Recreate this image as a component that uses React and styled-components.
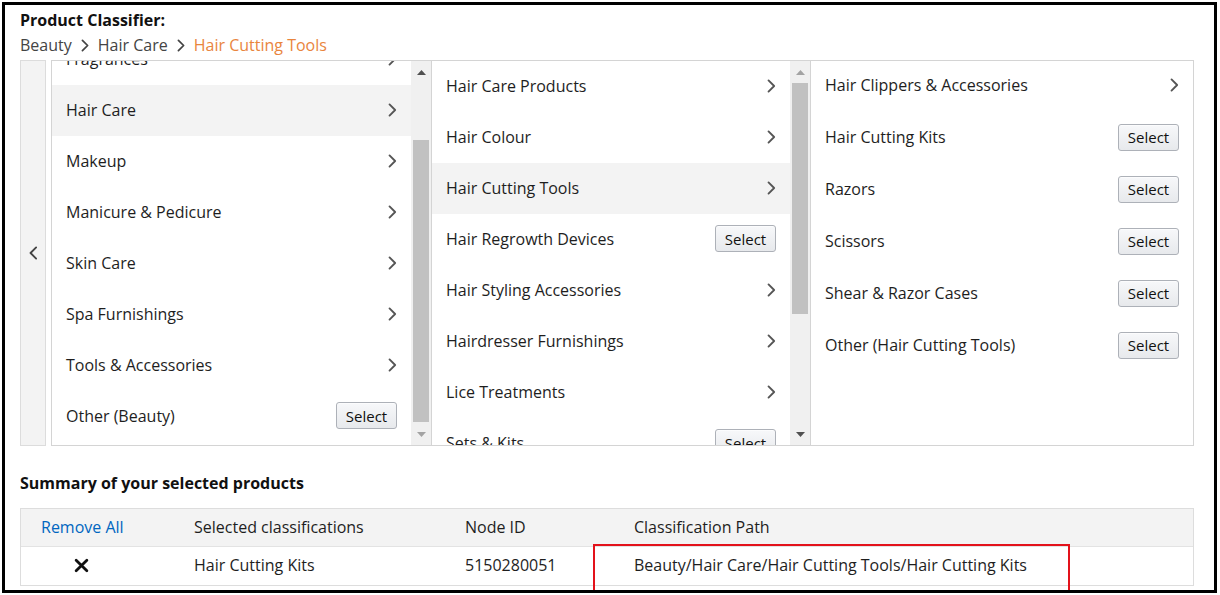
import React from "react";
import styled, { createGlobalStyle } from "styled-components";

const GlobalStyle = createGlobalStyle`
  html, body { margin: 0; padding: 0; background: #fff; }
  body { font-family: "Open Sans", "Noto Sans", Arial, sans-serif; color: #111; }
  * { box-sizing: border-box; }
`;

const Frame = styled.div`
  margin: 2px 0 0 2px;
  width: 1215px;
  height: 591px;
  border: 3px solid #000;
  padding: 5px 20px 0 15px;
  overflow: hidden;
  background: #fff;
`;

const Title = styled.div`
  font-weight: 700;
  font-size: 16px;
  line-height: 20px;
  color: #111;
`;

const Breadcrumb = styled.div`
  display: flex;
  align-items: center;
  gap: 9px;
  margin-top: 4px;
  height: 22px;
  font-size: 16px;
  color: #444;
`;

const Crumb = styled.span`
  color: ${(p) => (p.$active ? "#e9853d" : "#444")};
`;

const Browser = styled.div`
  display: flex;
  margin-top: 4px;
  height: 386px;
`;

const BackCol = styled.div`
  width: 26px;
  border: 1px solid #dcdcdc;
  background: #f3f3f3;
  display: flex;
  align-items: center;
  justify-content: center;
`;

const Panes = styled.div`
  flex: 1;
  display: flex;
  margin-left: 5px;
  border: 1px solid #d4d4d4;
`;

const Pane = styled.div`
  display: flex;
  width: ${(p) => (p.$width ? `${p.$width}px` : "auto")};
  flex: ${(p) => (p.$width ? "none" : "1")};
  border-right: ${(p) => (p.$last ? "none" : "1px solid #d4d4d4")};
`;

const ListViewport = styled.div`
  flex: 1;
  overflow: hidden;
`;

const List = styled.div`
  margin-top: ${(p) => p.$offset || 0}px;
`;

const Row = styled.div`
  height: ${(p) => p.$h || 51}px;
  display: flex;
  align-items: center;
  justify-content: space-between;
  padding: 0 14px 2px 14px;
  font-size: 16px;
  color: #1e1e1e;
  background: ${(p) => (p.$active ? "#f3f3f3" : "#fff")};
`;

const SelectButton = styled.button`
  width: 61px;
  height: 27px;
  border: 1px solid #adb1b8;
  border-radius: 3px;
  background: linear-gradient(#f7f8fa, #e7e9ec);
  box-shadow: inset 0 1px 0 rgba(255, 255, 255, 0.6);
  font-family: inherit;
  font-size: 15px;
  color: #111;
  padding: 0;
  cursor: pointer;
`;

const Track = styled.div`
  width: 20px;
  background: #f0f0f0;
  display: flex;
  flex-direction: column;
  align-items: center;
`;

const ArrowBox = styled.div`
  height: 22px;
  width: 100%;
  display: flex;
  align-items: center;
  justify-content: center;
`;

const ThumbArea = styled.div`
  flex: 1;
  width: 100%;
  padding: 0 2px;
`;

const Thumb = styled.div`
  background: #c1c1c1;
  margin-top: ${(p) => p.$top}px;
  height: ${(p) => p.$height}px;
`;

const Summary = styled.div`
  margin-top: 26px;
  font-weight: 700;
  font-size: 16px;
  line-height: 22px;
  color: #111;
`;

const Table = styled.div`
  margin-top: 14px;
  border: 1px solid #dddddd;
`;

const TRow = styled.div`
  position: relative;
  display: grid;
  grid-template-columns: 153px 271px 169px 1fr;
  align-items: center;
  height: ${(p) => p.$h}px;
  padding-bottom: 2px;
  background: ${(p) => (p.$head ? "#f3f3f3" : "#fff")};
  border-top: ${(p) => (p.$head ? "none" : "1px solid #e3e3e3")};
  font-size: 16px;
  color: #1e1e1e;
`;

const Cell = styled.div`
  padding-left: 20px;
  white-space: nowrap;
`;

const RemoveCell = styled.div`
  padding-left: 20px;
  display: flex;
`;

const RemoveInner = styled.div`
  width: 80px;
  display: flex;
  justify-content: center;
`;

const Link = styled.a`
  color: #0066c0;
  text-decoration: none;
  cursor: pointer;
`;

const Highlight = styled.div`
  position: absolute;
  left: 572px;
  top: -3px;
  width: 477px;
  height: 60px;
  border: 2px solid #e3121b;
  pointer-events: none;
`;

const Chevron = ({ dir = "right", size = 14, color = "#555", w = 2 }) => (
  <svg width={size * 0.62} height={size} viewBox="0 0 9 15" fill="none">
    <path
      d={dir === "right" ? "M1.5 1.5 L7.5 7.5 L1.5 13.5" : "M7.5 1.5 L1.5 7.5 L7.5 13.5"}
      stroke={color}
      strokeWidth={w}
      strokeLinecap="round"
      strokeLinejoin="round"
    />
  </svg>
);

const Tri = ({ up, color }) => (
  <svg width="9" height="5" viewBox="0 0 9 5">
    <path d={up ? "M0 5 L4.5 0 L9 5 Z" : "M0 0 L4.5 5 L9 0 Z"} fill={color} />
  </svg>
);

const Scrollbar = ({ upDark, downDark, top, height }) => (
  <Track>
    <ArrowBox>
      <Tri up color={upDark ? "#505050" : "#a3a3a3"} />
    </ArrowBox>
    <ThumbArea>
      <Thumb $top={top} $height={height} />
    </ThumbArea>
    <ArrowBox>
      <Tri color={downDark ? "#505050" : "#a3a3a3"} />
    </ArrowBox>
  </Track>
);

const CloseX = () => (
  <svg width="15" height="15" viewBox="0 0 14 14">
    <path d="M2 2 L12 12 M12 2 L2 12" stroke="#111" strokeWidth="2.6" strokeLinecap="round" />
  </svg>
);

const col1 = [
  { t: "Fragrances", k: "more" },
  { t: "Hair Care", k: "more", active: true },
  { t: "Makeup", k: "more" },
  { t: "Manicure & Pedicure", k: "more" },
  { t: "Skin Care", k: "more" },
  { t: "Spa Furnishings", k: "more" },
  { t: "Tools & Accessories", k: "more" },
  { t: "Other (Beauty)", k: "select" },
];

const col2 = [
  { t: "Hair Care Products", k: "more" },
  { t: "Hair Colour", k: "more" },
  { t: "Hair Cutting Tools", k: "more", active: true },
  { t: "Hair Regrowth Devices", k: "select" },
  { t: "Hair Styling Accessories", k: "more" },
  { t: "Hairdresser Furnishings", k: "more" },
  { t: "Lice Treatments", k: "more" },
  { t: "Sets & Kits", k: "select" },
];

const col3 = [
  { t: "Hair Clippers & Accessories", k: "more" },
  { t: "Hair Cutting Kits", k: "select" },
  { t: "Razors", k: "select" },
  { t: "Scissors", k: "select" },
  { t: "Shear & Razor Cases", k: "select" },
  { t: "Other (Hair Cutting Tools)", k: "select" },
];

const Items = ({ items, h }) =>
  items.map((it) => (
    <Row key={it.t} $active={it.active} $h={h}>
      <span>{it.t}</span>
      {it.k === "more" ? <Chevron /> : <SelectButton>Select</SelectButton>}
    </Row>
  ));

export default function App() {
  return (
    <>
      <GlobalStyle />
      <Frame>
        <Title>Product Classifier:</Title>
        <Breadcrumb>
          <Crumb>Beauty</Crumb>
          <Chevron size={13} color="#444" />
          <Crumb>Hair Care</Crumb>
          <Chevron size={13} color="#444" />
          <Crumb $active>Hair Cutting Tools</Crumb>
        </Breadcrumb>
        <Browser>
          <BackCol>
            <Chevron dir="left" size={14} color="#444" />
          </BackCol>
          <Panes>
            <Pane $width={380}>
              <ListViewport>
                <List $offset={-27}>
                  <Items items={col1} />
                </List>
              </ListViewport>
              <Scrollbar upDark top={57} height={282} />
            </Pane>
            <Pane $width={379}>
              <ListViewport>
                <List>
                  <Items items={col2} />
                </List>
              </ListViewport>
              <Scrollbar downDark top={0} height={231} />
            </Pane>
            <Pane $last>
              <ListViewport>
                <List $offset={-1}>
                  <Items items={col3} h={52} />
                </List>
              </ListViewport>
            </Pane>
          </Panes>
        </Browser>
        <Summary>Summary of your selected products</Summary>
        <Table>
          <TRow $head $h={37}>
            <RemoveCell>
              <Link>Remove All</Link>
            </RemoveCell>
            <Cell>Selected classifications</Cell>
            <Cell>Node ID</Cell>
            <Cell>Classification Path</Cell>
          </TRow>
          <TRow $h={39}>
            <RemoveCell>
              <RemoveInner>
                <CloseX />
              </RemoveInner>
            </RemoveCell>
            <Cell>Hair Cutting Kits</Cell>
            <Cell>5150280051</Cell>
            <Cell>Beauty/Hair Care/Hair Cutting Tools/Hair Cutting Kits</Cell>
            <Highlight />
          </TRow>
        </Table>
      </Frame>
    </>
  );
}
